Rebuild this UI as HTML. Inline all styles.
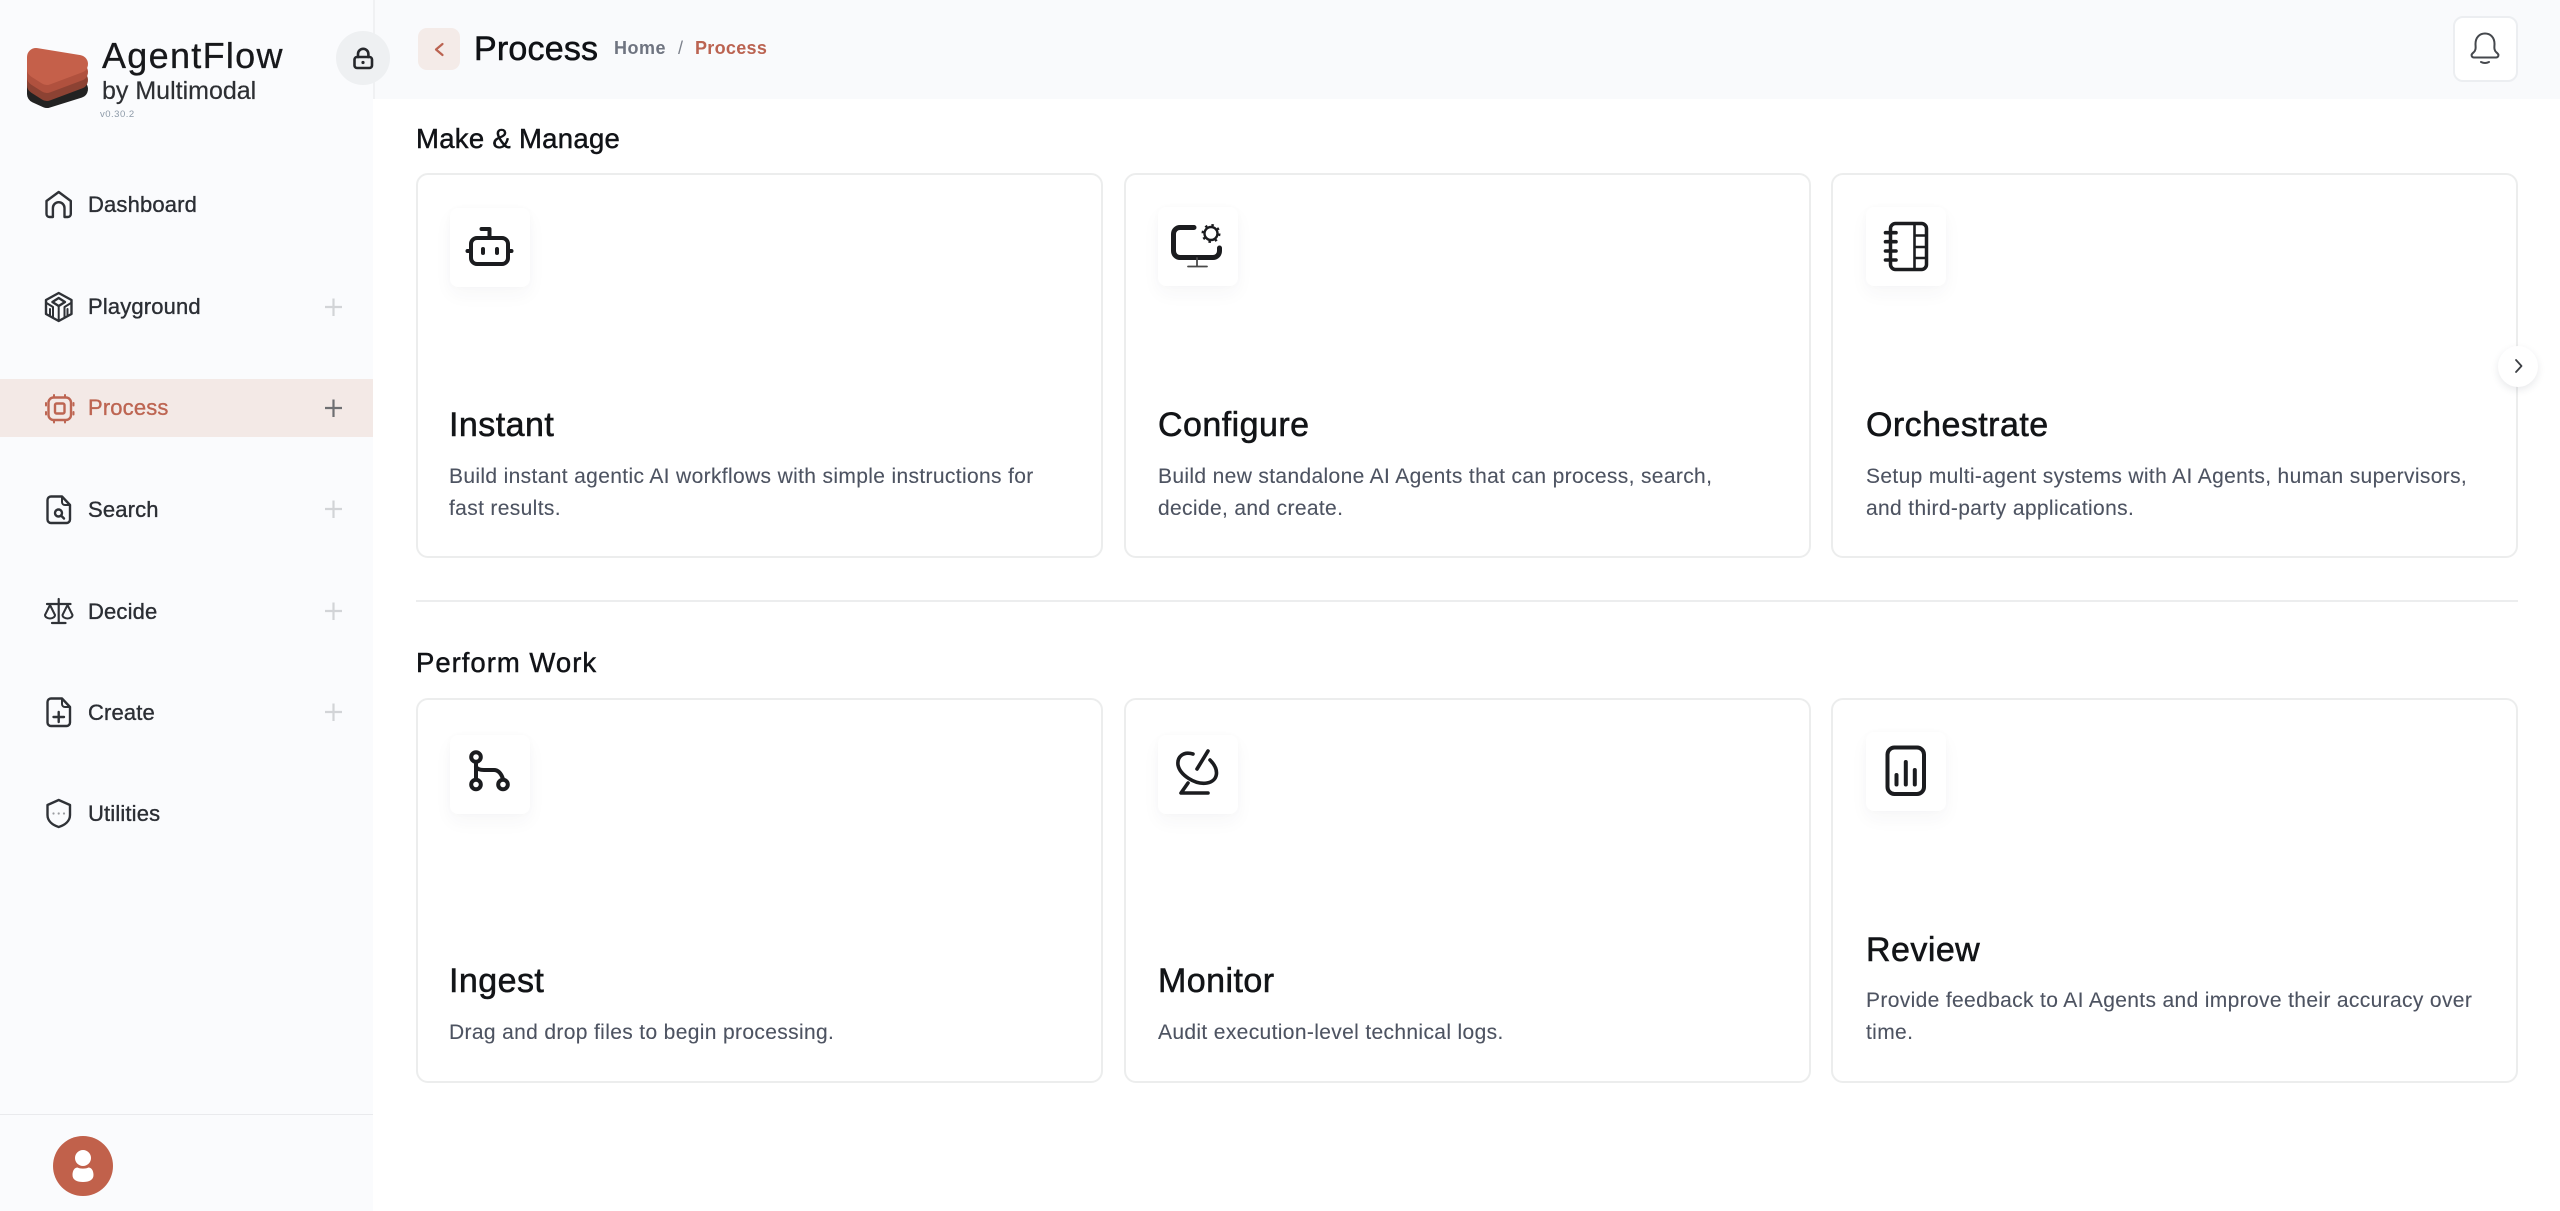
<!DOCTYPE html>
<html lang="en"><head><meta charset="utf-8"><title>AgentFlow - Process</title>
<style>
*{box-sizing:border-box}
html,body{margin:0;padding:0;width:2560px;height:1211px;overflow:hidden;background:#fff;font-family:"Liberation Sans",sans-serif}
.a{position:absolute;white-space:nowrap}
#side{position:absolute;left:0;top:0;width:373px;height:1211px;background:#fafbfd}
#top{position:absolute;left:373px;top:0;width:2187px;height:99px;background:#f9fafc;border-left:2px solid #f0f1f3}
.nav{font-size:22px;letter-spacing:.15px;color:#2b2e34;line-height:30px;left:88px;-webkit-text-stroke:.35px #2b2e34}
.band{position:absolute;left:0;top:379px;width:373px;height:58px;background:#f3e9e6}
.card{position:absolute;background:#fff;border:2px solid #eceded;border-radius:12px}
.tile{position:absolute;width:80px;height:79px;background:#fff;border-radius:8px;box-shadow:0 8px 18px rgba(40,50,80,.04),0 0 8px rgba(40,50,80,.02)}
.h2{font-size:27.5px;letter-spacing:.3px;color:#111317;line-height:34px;left:416px;-webkit-text-stroke:.45px #111317}
.t{font-size:34px;letter-spacing:.45px;color:#121417;line-height:40px;-webkit-text-stroke:.55px #121417}
.d{font-size:21px;letter-spacing:.35px;color:#4d5361;line-height:32px;-webkit-text-stroke:.1px #4d5361}
svg{position:absolute;left:0;top:0;overflow:visible}
</style></head><body>
<div id="side"></div>
<div id="top"></div>
<div class="band"></div>

<div class="a" style="left:102px;top:36px;font-size:36px;letter-spacing:1.3px;line-height:40px;color:#17181b;-webkit-text-stroke:.3px #17181b">AgentFlow</div>
<div class="a" style="left:102px;top:76px;font-size:25px;letter-spacing:0;line-height:30px;color:#2d2f33;-webkit-text-stroke:.2px #2d2f33">by Multimodal</div>
<div class="a" style="left:100px;top:109px;font-size:9.5px;letter-spacing:.5px;line-height:12px;color:#8d9aa8">v0.30.2</div>
<div class="a" style="left:336px;top:31px;width:54px;height:54px;border-radius:50%;background:#eef0f2"></div>

<div class="a nav" style="top:190px">Dashboard</div>
<div class="a nav" style="top:292px">Playground</div>
<div class="a nav" style="top:393px;color:#bd6552;-webkit-text-stroke:.35px #bd6552">Process</div>
<div class="a nav" style="top:495px">Search</div>
<div class="a nav" style="top:597px">Decide</div>
<div class="a nav" style="top:698px">Create</div>
<div class="a nav" style="top:799px">Utilities</div>

<div class="a" style="left:0;top:1114px;width:373px;height:1px;background:#e9eaed"></div>
<div class="a" style="left:53px;top:1136px;width:60px;height:60px;border-radius:50%;background:#c1614b"></div>

<div class="a" style="left:418px;top:28px;width:42px;height:42px;border-radius:9px;background:#f4ebe8"></div>
<div class="a" style="left:474px;top:28px;font-size:34px;letter-spacing:.2px;line-height:42px;color:#0f1115;-webkit-text-stroke:.55px #0f1115">Process</div>
<div class="a" style="left:614px;top:36px;font-size:18px;letter-spacing:.5px;line-height:24px;font-weight:700;color:#6f7480">Home</div>
<div class="a" style="left:678px;top:36px;font-size:18px;line-height:24px;color:#7d828c">/</div>
<div class="a" style="left:695px;top:36px;font-size:18px;letter-spacing:.3px;line-height:24px;font-weight:700;color:#bb6351">Process</div>
<div class="a" style="left:2453px;top:16px;width:65px;height:66px;background:#fff;border:2px solid #eceef1;border-radius:10px"></div>

<div class="a h2" style="top:122px">Make &amp; Manage</div>
<div class="card" style="left:416px;top:173px;width:687px;height:385px"></div>
<div class="card" style="left:1124px;top:173px;width:687px;height:385px"></div>
<div class="card" style="left:1831px;top:173px;width:687px;height:385px"></div>
<div class="a" style="left:416px;top:600px;width:2102px;height:2px;background:#ecedee"></div>
<div class="a h2" style="top:646px;letter-spacing:1px">Perform Work</div>
<div class="card" style="left:416px;top:698px;width:687px;height:385px"></div>
<div class="card" style="left:1124px;top:698px;width:687px;height:385px"></div>
<div class="card" style="left:1831px;top:698px;width:687px;height:385px"></div>

<div class="tile" style="left:450px;top:208px"></div>
<div class="tile" style="left:1158px;top:207px"></div>
<div class="tile" style="left:1866px;top:207px"></div>
<div class="tile" style="left:450px;top:735px"></div>
<div class="tile" style="left:1158px;top:735px"></div>
<div class="tile" style="left:1866px;top:732px"></div>

<div class="a t" style="left:449px;top:405px">Instant</div>
<div class="a d" style="left:449px;top:461px">Build instant agentic AI workflows with simple instructions for</div>
<div class="a d" style="left:449px;top:493px">fast results.</div>
<div class="a t" style="left:1158px;top:405px">Configure</div>
<div class="a d" style="left:1158px;top:461px">Build new standalone AI Agents that can process, search,</div>
<div class="a d" style="left:1158px;top:493px">decide, and create.</div>
<div class="a t" style="left:1866px;top:405px">Orchestrate</div>
<div class="a d" style="left:1866px;top:461px">Setup multi-agent systems with AI Agents, human supervisors,</div>
<div class="a d" style="left:1866px;top:493px">and third-party applications.</div>
<div class="a t" style="left:449px;top:961px">Ingest</div>
<div class="a d" style="left:449px;top:1017px">Drag and drop files to begin processing.</div>
<div class="a t" style="left:1158px;top:961px">Monitor</div>
<div class="a d" style="left:1158px;top:1017px">Audit execution-level technical logs.</div>
<div class="a t" style="left:1866px;top:930px">Review</div>
<div class="a d" style="left:1866px;top:985px">Provide feedback to AI Agents and improve their accuracy over</div>
<div class="a d" style="left:1866px;top:1017px">time.</div>

<div class="a" style="left:2498px;top:346px;width:40px;height:41px;border-radius:50%;background:#fff;box-shadow:0 3px 8px rgba(30,40,60,.10)"></div>

<svg width="2560" height="1211" viewBox="0 0 2560 1211" fill="none" stroke-linecap="round" stroke-linejoin="round">
<!-- logo -->
<g stroke-width="18">
<polygon points="36,82 79,89 47,99 36,94" fill="#222222" stroke="#222222"/>
<polygon points="36,73 79,80 47,92 36,85" fill="#8c4233" stroke="#8c4233"/>
<polygon points="36,65 79,72 47,84 36,77" fill="#b0513e" stroke="#b0513e"/>
<polygon points="36,57 79,64 47,76 36,69" fill="#c5604a" stroke="#c5604a"/>
</g>
<!-- lock -->
<g stroke="#26282c" stroke-width="2.600">
<rect x="354.500" y="57" width="17.500" height="11" rx="2.500"/>
<path d="M358 57v-3a5.200 5.200 0 0 1 10.400 0v3"/>
</g>
<circle cx="363" cy="62.500" r="1.600" fill="#26282c"/>
<!-- nav icons -->
<g stroke="#2f3237" stroke-width="2.400">
<path d="M46.500 201 58.700 192 70.800 201V214a3 3 0 0 1-3 3H64.500V208a5.800 5.800 0 0 0-11.600 0V217H49.500a3 3 0 0 1-3-3Z"/>
<path d="M58.700 293 71.500 300V314L58.700 321 46 314V300Z"/>
<path d="M58.700 298 65 302 58.700 306 52.400 302Z"/>
<path d="M58.700 306V320M46.500 303 53 307V317M71 303 64.500 307V317M50 309v6M67.500 309v6" stroke-width="2"/>
<path d="M47.500 500a3.500 3.500 0 0 1 3.500-3.500H62L70 505V519.500a3.500 3.500 0 0 1-3.500 3.500H51A3.500 3.500 0 0 1 47.500 519.500Z"/>
<path d="M62 497V502a3 3 0 0 0 3 3H70" stroke-width="2"/>
<circle cx="58.500" cy="513" r="3.500"/><path d="M61 515.500 64 518.500"/>
<path d="M58.700 599V622M52 623H65.500M47 604H70.500" stroke-width="2.200"/>
<path d="M45 615 50 605 55 615a5 3.500 0 0 1-10 0ZM62.500 615 67.500 605 72.500 615a5 3.500 0 0 1-10 0Z" stroke-width="2"/>
<path d="M47.500 702a3.500 3.500 0 0 1 3.500-3.500H62L70 707V722.500a3.500 3.500 0 0 1-3.500 3.500H51A3.500 3.500 0 0 1 47.500 722.500Z"/>
<path d="M62 699V704a3 3 0 0 0 3 3H70" stroke-width="2"/>
<path d="M58.700 712V722M53.500 717H64" stroke-width="2.400"/>
<path d="M58.700 800 70 805V815C70 821 65 825 58.700 827 52.500 825 47.500 821 47.500 815V805Z"/>
</g>
<g fill="#9a9ca0"><circle cx="53.500" cy="813.500" r="1.100"/><circle cx="58.700" cy="813.500" r="1.100"/><circle cx="64" cy="813.500" r="1.100"/></g>
<g stroke="#bd6552" stroke-width="2.400">
<rect x="48.500" y="397.500" width="22.500" height="22.500" rx="5"/>
<rect x="55" y="403.500" width="9.500" height="10" rx="1.500"/>
<path d="M54 395v1.500M65 395v1.500M54 421v1.500M65 421v1.500M46 403v2.500M46 412v2.500M73.500 403v2.500M73.500 412v2.500" stroke-width="2"/>
</g>
<!-- plus -->
<g stroke="#d2d4d7" stroke-width="2.200" stroke-linecap="butt">
<path d="M325 307H342M333.500 298.500V316M325 509H342M333.500 500.500V518M325 611H342M333.500 602.500V620M325 712H342M333.500 703.500V721"/>
</g>
<path d="M325 408H342M333.500 399.500V417" stroke="#6e6f72" stroke-width="2.200" stroke-linecap="butt"/>
<!-- back + avatar + bell + next -->
<path d="M442.500 44 436 49.500 442.500 55" stroke="#bb6351" stroke-width="2.200"/>
<circle cx="83" cy="1158" r="8" fill="#fff"/>
<path d="M72.500 1175C72.500 1170 75 1167.500 77.500 1167.500 80 1169 86 1169 88.500 1167.500 91 1167.500 93.500 1170 93.500 1175 93.500 1180 89 1182 83 1182S72.500 1180 72.500 1175Z" fill="#fff"/>
<path d="M2473.500 52.500C2476.500 50 2475.500 46.500 2475.500 44C2475.500 37.500 2479.500 33.500 2485 33.500S2494.500 37.500 2494.500 44C2494.500 46.500 2493.500 50 2496.500 52.500C2500 55 2498 57.500 2496 57.500H2474C2472 57.500 2470 55 2473.500 52.500Z" stroke="#45484d" stroke-width="2"/>
<path d="M2481 62Q2485 64 2489 62" stroke="#45484d" stroke-width="2"/>
<path d="M2516 360 2521.500 366 2516 372" stroke="#3c3f44" stroke-width="1.800"/>
<!-- robot -->
<g stroke="#1b1c1f" stroke-width="4">
<rect x="471" y="238" width="37" height="26" rx="6"/>
<path d="M489.500 237V229H481.500M467.500 251H469.500M509.500 251H511.500"/>
<path d="M483 249V253M497 249V253"/>
</g>
<!-- configure -->
<g stroke="#1b1c1f">
<path d="M1194 227.500H1180A6.500 6.500 0 0 0 1173.500 234V251A6.500 6.500 0 0 0 1180 257.500H1213A6.500 6.500 0 0 0 1219.500 251V248" stroke-width="5"/>
<path d="M1197 258V266M1188 266.500H1207" stroke-width="1.800" stroke="#4a4a4a"/>
<circle cx="1211" cy="233.500" r="6.500" stroke-width="2.400"/>
<circle cx="1211" cy="233.500" r="8.500" stroke-width="2" stroke-dasharray="2.500 4.200" stroke-linecap="butt"/>
</g>
<!-- orchestrate -->
<g stroke="#1b1c1f">
<rect x="1890.500" y="223.500" width="36" height="46" rx="5" stroke-width="3.500"/>
<path d="M1914.500 224V269M1914.500 235.500H1926M1914.500 247H1926M1914.500 258H1926" stroke-width="2.600"/>
<path d="M1885.500 232.700H1896M1885.500 241.700H1896M1885.500 251H1896M1885.500 260H1896" stroke-width="3.600"/>
</g>
<!-- ingest -->
<g stroke="#1b1c1f" stroke-width="4">
<circle cx="476" cy="757" r="4.800"/><circle cx="476" cy="784.500" r="4.800"/><circle cx="503" cy="784.500" r="4.800"/>
<path d="M476 762V779M476 767Q478 770 484 770H494Q500 770 503 779"/>
</g>
<!-- monitor -->
<g stroke="#1b1c1f" stroke-width="3.600">
<path d="M1193 754C1183 751 1177 757 1178 765C1180 775 1195 785 1207 783C1218 781 1220 770 1210 760"/>
<path d="M1197 769 1208 751M1188 783 1181 793H1208"/>
</g>
<!-- review -->
<g stroke="#1b1c1f" stroke-width="4">
<rect x="1887.500" y="747.500" width="36.500" height="46.500" rx="7"/>
<path d="M1896.500 775V784.500M1905.800 762V784.500M1914.800 770V784.500"/>
</g>
</svg>
</body></html>
